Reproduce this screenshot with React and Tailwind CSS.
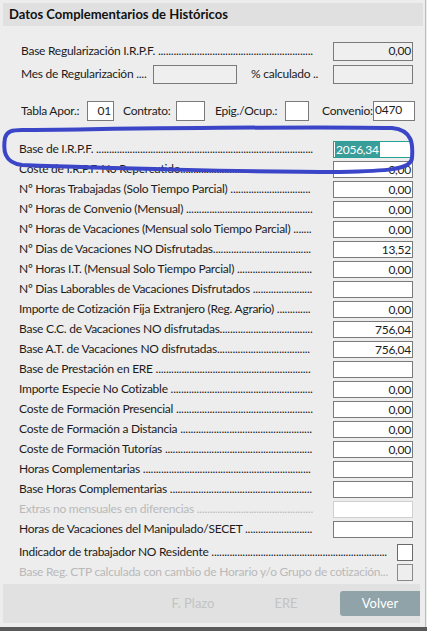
import React from 'react';

const TRACK = -0.25;
const FONT = '12px Lato';

// medir texto para calcular cuántos puntos caben en la guía
const ctx = typeof document !== 'undefined' ? document.createElement('canvas').getContext('2d') : null;
function textW(s) {
  if (!ctx) return s.length * 5;
  ctx.font = FONT;
  return ctx.measureText(s).width + s.length * TRACK;
}
function withDots(label, width) {
  const n = Math.max(0, Math.floor((width - textW(label) - 1) / textW('.')));
  return label + '.'.repeat(n);
}

// filas de la lista principal
const rows = [
  { label: 'Base de I.R.P.F. ', value: '2056,34', selected: true },
  { label: 'Coste de I.R.P.F. No Repercutido', value: '0,00' },
  { label: 'Nº Horas Trabajadas (Solo Tiempo Parcial) ', value: '0,00' },
  { label: 'Nº Horas de Convenio (Mensual) ', value: '0,00' },
  { label: 'Nº Horas de Vacaciones (Mensual solo Tiempo Parcial) ', value: '0,00' },
  { label: 'Nº Dias de Vacaciones NO Disfrutadas', value: '13,52' },
  { label: 'Nº Horas I.T. (Mensual Solo Tiempo Parcial) ', value: '0,00' },
  { label: 'Nº Dias Laborables de Vacaciones Disfrutados ', value: '' },
  { label: 'Importe de Cotización Fija Extranjero (Reg. Agrario) ', value: '0,00' },
  { label: 'Base C.C. de Vacaciones NO disfrutadas', value: '756,04' },
  { label: 'Base A.T. de Vacaciones NO disfrutadas', value: '756,04' },
  { label: 'Base de Prestación en ERE ', value: '' },
  { label: 'Importe Especie No Cotizable ', value: '0,00' },
  { label: 'Coste de Formación Presencial ', value: '0,00' },
  { label: 'Coste de Formación a Distancia ', value: '0,00' },
  { label: 'Coste de Formación Tutorías ', value: '0,00' },
  { label: 'Horas Complementarias ', value: '' },
  { label: 'Base Horas Complementarias ', value: '' },
  { label: 'Extras no mensuales en diferencias ', value: '', disabled: true },
  { label: 'Horas de Vacaciones del Manipulado/SECET ', value: '' },
];

function Leader({ label, width, disabled }) {
  return (
    <div
      className={`overflow-hidden whitespace-nowrap shrink-0 ${disabled ? 'text-[#b9b9b9]' : 'text-[#1c1c1c]'}`}
      style={{ width }}
    >
      {withDots(label, width)}
    </div>
  );
}

function ValueBox({ value, selected, disabled }) {
  if (selected) {
    return (
      <div className="ml-[19px] w-[80px] h-[17px] border border-[#23a197] bg-white flex items-center pl-[1px]">
        <span className="bg-[#3b9d99] text-white leading-[15px] px-[1px]">{value}</span>
      </div>
    );
  }
  return (
    <div
      className={`ml-[19px] w-[80px] h-[17px] border bg-white flex items-end justify-end pr-[1px] leading-[15px] ${
        disabled ? 'border-[#cfcfcf]' : 'border-[#7a7a7a]'
      }`}
    >
      {value}
    </div>
  );
}

function SmallBox({ value, align, width }) {
  return (
    <div
      className={`shrink-0 h-[20px] border border-[#7a7a7a] bg-white flex pr-[2px] pl-[1px] leading-[16px] ${
        align === 'left' ? 'justify-start items-start' : 'justify-end items-center'
      }`}
      style={{ width }}
    >
      {value}
    </div>
  );
}

export default function App() {
  return (
    <div
      className="relative w-[427px] h-[631px] bg-[#ededed] text-[12px] tracking-[-0.25px] text-[#1c1c1c] flex flex-col overflow-hidden"
      style={{ fontFamily: 'Lato, "Open Sans", sans-serif' }}
    >
      <div className="absolute top-0 bottom-[4px] left-[425px] w-[1px] bg-[#bcbcbc]" />

      {/* cabecera */}
      <div className="mt-[3px] ml-[3px] w-[420px] h-[23px] bg-[#e0e0e0] flex items-center pl-[6px]">
        <span className="font-bold text-[13px] tracking-normal text-[#111]">Datos Complementarios de Históricos</span>
      </div>

      {/* regularización */}
      <div className="mt-[14px] h-[22px] flex items-center pl-[21px]">
        <Leader label="Base Regularización I.R.P.F. " width={295} />
        <div className="ml-[17px] w-[80px] h-[19px] border border-[#7a7a7a] bg-[#efefef] flex items-center justify-end pr-[1px]">
          0,00
        </div>
      </div>
      <div className="mt-[1px] h-[22px] flex items-center pl-[21px]">
        <span className="shrink-0 w-[132px] whitespace-nowrap">Mes de Regularización ....</span>
        <div className="shrink-0 w-[84px] h-[19px] border border-[#7a7a7a] bg-[#efefef]" />
        <span className="shrink-0 ml-[14px] w-[82px] whitespace-nowrap">% calculado ..</span>
        <div className="shrink-0 w-[80px] h-[19px] border border-[#7a7a7a] bg-[#efefef]" />
      </div>

      {/* tabla / contrato */}
      <div className="mt-[15px] h-[22px] flex items-center pl-[21px] whitespace-nowrap">
        <span className="shrink-0 w-[66px]">Tabla Apor.:</span>
        <SmallBox value="01" width={27} />
        <span className="shrink-0 ml-[9px] w-[53px]">Contrato:</span>
        <SmallBox value="" width={29} />
        <span className="shrink-0 ml-[10px] w-[70px]">Epig./Ocup.:</span>
        <SmallBox value="" width={24} />
        <span className="shrink-0 ml-[13px] w-[51px]">Convenio:</span>
        <SmallBox value="0470" align="left" width={42} />
      </div>

      {/* lista */}
      <div className="mt-[17px] flex flex-col">
        {rows.map((r) => (
          <div key={r.label} className="h-[20px] flex items-center pl-[19px]">
            <Leader label={r.label} width={295} disabled={r.disabled} />
            <ValueBox value={r.value} selected={r.selected} disabled={r.disabled} />
          </div>
        ))}
      </div>

      <div className="mt-[3px] h-[20px] flex items-center pl-[19px]">
        <Leader label="Indicador de trabajador NO Residente " width={371} />
        <div className="ml-[7px] w-[16px] h-[17px] border border-[#6a6a6a] bg-white" />
      </div>
      <div className="h-[20px] flex items-center pl-[19px]">
        <Leader label="Base Reg. CTP calculada con cambio de Horario y/o Grupo de cotización" width={371} disabled />
        <div className="ml-[7px] w-[16px] h-[17px] border border-[#8a8a8a] bg-[#eeeeee]" />
      </div>

      {/* botones */}
      <div className="mt-[2px] ml-[3px] w-[417px] h-[39px] bg-[#e1e1e1] flex items-center justify-end text-[13px] tracking-normal">
        <button className="w-[80px] h-[25px] text-[#c3c3c3]">F. Plazo</button>
        <button className="ml-[13px] w-[80px] h-[25px] text-[#c3c3c3]">ERE</button>
        <button className="ml-[14px] w-[80px] h-[25px] bg-[#8fa3a8] text-white rounded-l-[3px]">Volver</button>
      </div>

      <div className="mt-[4px] h-[4px] bg-[#5a5a5a]" />

      {/* marca a mano alrededor de Base de I.R.P.F. */}
      <svg className="absolute top-0 left-0 pointer-events-none" width="427" height="631" viewBox="0 0 427 631">
        <path
          d="M 22 130 C 120 129, 300 126, 392 128 C 413 130, 413 145, 412 158 C 411 170, 385 171, 340 172 C 250 172, 100 168, 22 165 C 4 163, 3 150, 5 138 C 7 131, 12 130, 22 130 Z"
          fill="none"
          stroke="#3b45c8"
          strokeWidth="4"
          strokeLinejoin="round"
        />
      </svg>
    </div>
  );
}
